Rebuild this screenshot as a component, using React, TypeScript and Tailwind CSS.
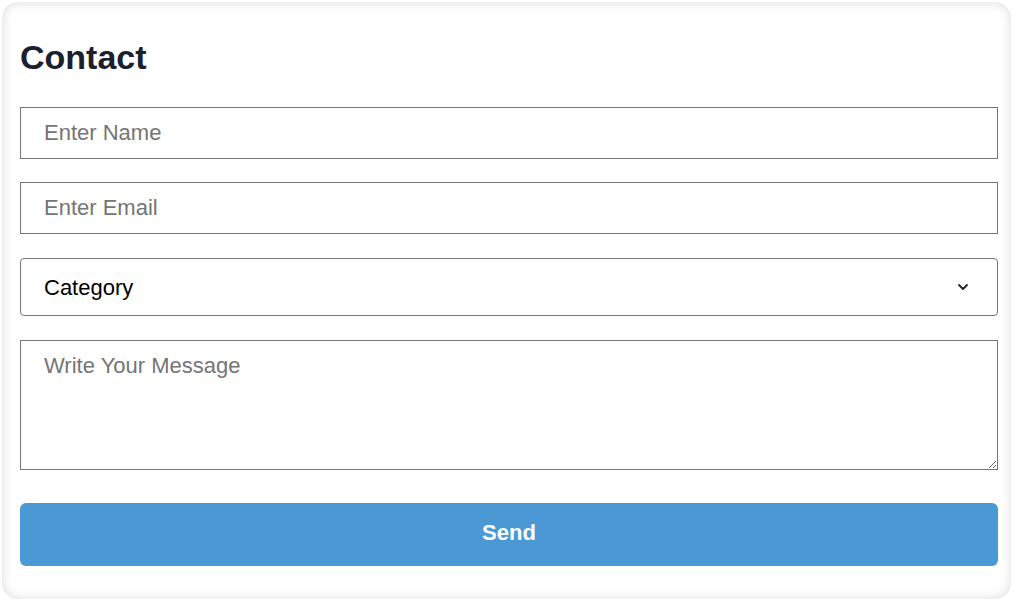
import React from 'react';

export default function App() {
  return (
    <div className="w-[1013px] h-[601px] bg-white p-[2px] font-['Liberation_Sans',Arial,sans-serif]">
      <div className="h-full rounded-[16px] bg-white shadow-[inset_0_0_12px_rgba(0,0,0,0.14)] pt-[38px] pl-[18px] pr-[13px]">
        <h1 className="text-[34px] leading-none font-bold text-[#19202e]">Contact</h1>
        <form className="mt-[33px] flex flex-col" onSubmit={e => e.preventDefault()}>
          <input
            type="text"
            placeholder="Enter Name"
            className="h-[52px] w-full border border-[#767676] pl-[23px] text-[22px] text-black placeholder:text-[#757575] outline-none"
          />
          <input
            type="email"
            placeholder="Enter Email"
            className="mt-[23px] h-[52px] w-full border border-[#767676] pl-[23px] text-[22px] text-black placeholder:text-[#757575] outline-none"
          />
          <div className="relative mt-[24px]">
            <select
              defaultValue=""
              className="h-[58px] w-full appearance-none rounded-[4px] border border-[#767676] bg-white pl-[23px] text-[22px] text-black outline-none"
            >
              <option value="">Category</option>
              <option value="general">General</option>
              <option value="support">Support</option>
            </select>
            <svg className="pointer-events-none absolute right-[29px] top-[24px] h-[10px] w-[12px]" viewBox="0 0 12 10" fill="none">
              <path d="M2 3l4 4 4-4" stroke="#222" strokeWidth="1.8" strokeLinecap="round" strokeLinejoin="round" />
            </svg>
          </div>
          <textarea
            placeholder="Write Your Message"
            className="mt-[24px] h-[130px] w-full border border-[#767676] pl-[23px] pt-[8px] text-[22px] text-black placeholder:text-[#757575] outline-none"
          />
          <button
            type="submit"
            className="mt-[33px] h-[63px] w-full rounded-[6px] bg-[#4a98d4] pb-[4px] text-[22px] font-bold text-white"
          >
            Send
          </button>
        </form>
      </div>
    </div>
  );
}
